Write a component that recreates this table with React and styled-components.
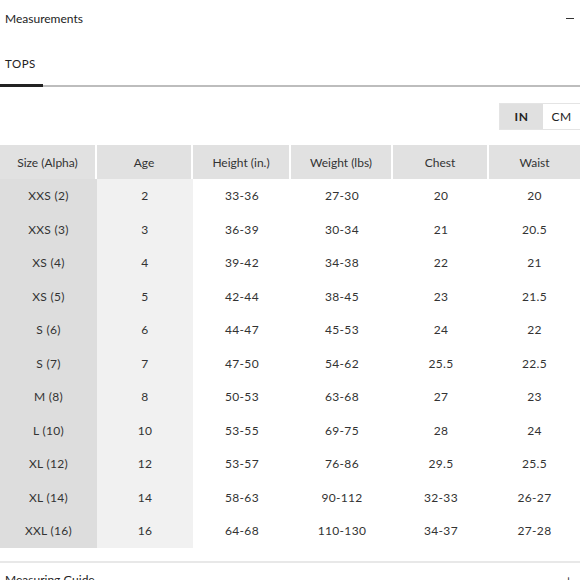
import React, { useState } from 'react';
import styled, { createGlobalStyle } from 'styled-components';

const GlobalStyle = createGlobalStyle`
  html, body {
    margin: 0;
    padding: 0;
    background: #fff;
    overflow: hidden;
  }
  body {
    font-family: 'Lato', 'Open Sans', sans-serif;
    color: #333;
  }
`;

const Page = styled.div`
  width: 580px;
  height: 580px;
  overflow: hidden;
`;

const SectionHead = styled.div`
  display: flex;
  justify-content: space-between;
  align-items: center;
  height: 37px;
  padding: 0 6px 0 5px;
  font-size: 12px;
  color: #222;
`;

const Minus = styled.span`
  width: 8px;
  height: 1.5px;
  background: #333;
`;

const Tabs = styled.div`
  display: flex;
  border-bottom: 2px solid #bdbdbd;
  height: 48px;
`;

const Tab = styled.div`
  display: flex;
  align-items: center;
  width: 43px;
  padding-left: 5px;
  box-sizing: border-box;
  font-size: 11.5px;
  letter-spacing: 0.5px;
  color: #222;
  margin-bottom: -2px;
  border-bottom: ${({ active }) => (active ? '3px solid #222' : 'none')};
  padding-top: 6px;
`;

const UnitRow = styled.div`
  display: flex;
  justify-content: flex-end;
  padding-top: 16px;
  height: 58px;
  box-sizing: border-box;
`;

const Toggle = styled.div`
  display: flex;
  height: 25px;
  border: 1px solid #e4e4e4;
  border-right: none;
`;

const UnitButton = styled.button`
  border: none;
  padding: 0;
  margin: 0;
  width: ${({ w }) => w}px;
  background: ${({ active }) => (active ? '#e0e0e0' : '#fff')};
  font-family: 'Lato', sans-serif;
  font-size: 12px;
  font-weight: ${({ active }) => (active ? 700 : 400)};
  color: #222;
  letter-spacing: 0.5px;
  cursor: pointer;
`;

const cols = '97px 96px 98px 102px 96px 91px';

const HeadRow = styled.div`
  display: grid;
  grid-template-columns: ${cols};
  height: 34px;
`;

const HeadCell = styled.div`
  display: flex;
  align-items: center;
  justify-content: center;
  background: #e1e1e1;
  font-size: 12px;
  color: #333;
  border-right: ${({ last }) => (last ? 'none' : '2px solid #fff')};
`;

const Body = styled.div`
  display: grid;
  grid-template-columns: ${cols};
  grid-auto-rows: 33.5px;
`;

const Cell = styled.div`
  display: flex;
  align-items: center;
  justify-content: center;
  font-size: 12px;
  color: #333;
  letter-spacing: 0.3px;
  background: ${({ bg }) => bg || '#fff'};
`;

const Footer = styled.div`
  margin-top: 13px;
  border-top: 2px solid #e8e8e8;
  display: flex;
  justify-content: space-between;
  padding: 9px 8px 0 5px;
  font-size: 12px;
  color: #222;
`;

const headers = ['Size (Alpha)', 'Age', 'Height (in.)', 'Weight (lbs)', 'Chest', 'Waist'];

const rows = [
  ['XXS (2)', '2', '33-36', '27-30', '20', '20'],
  ['XXS (3)', '3', '36-39', '30-34', '21', '20.5'],
  ['XS (4)', '4', '39-42', '34-38', '22', '21'],
  ['XS (5)', '5', '42-44', '38-45', '23', '21.5'],
  ['S (6)', '6', '44-47', '45-53', '24', '22'],
  ['S (7)', '7', '47-50', '54-62', '25.5', '22.5'],
  ['M (8)', '8', '50-53', '63-68', '27', '23'],
  ['L (10)', '10', '53-55', '69-75', '28', '24'],
  ['XL (12)', '12', '53-57', '76-86', '29.5', '25.5'],
  ['XL (14)', '14', '58-63', '90-112', '32-33', '26-27'],
  ['XXL (16)', '16', '64-68', '110-130', '34-37', '27-28'],
];

const colBg = ['#dddddd', '#f1f1f1'];

export default function App() {
  const [unit, setUnit] = useState('IN');

  return (
    <Page>
      <GlobalStyle />
      <SectionHead>
        <span>Measurements</span>
        <Minus />
      </SectionHead>
      <Tabs>
        <Tab active>TOPS</Tab>
      </Tabs>
      <UnitRow>
        <Toggle>
          <UnitButton w={43} active={unit === 'IN'} onClick={() => setUnit('IN')}>
            IN
          </UnitButton>
          <UnitButton w={37} active={unit === 'CM'} onClick={() => setUnit('CM')}>
            CM
          </UnitButton>
        </Toggle>
      </UnitRow>
      <HeadRow>
        {headers.map((h, i) => (
          <HeadCell key={h} last={i === headers.length - 1}>
            {h}
          </HeadCell>
        ))}
      </HeadRow>
      <Body>
        {rows.map((r) =>
          r.map((v, i) => (
            <Cell key={r[0] + i} bg={colBg[i]}>
              {v}
            </Cell>
          ))
        )}
      </Body>
      <Footer>
        <span>Measuring Guide</span>
        <span>+</span>
      </Footer>
    </Page>
  );
}
